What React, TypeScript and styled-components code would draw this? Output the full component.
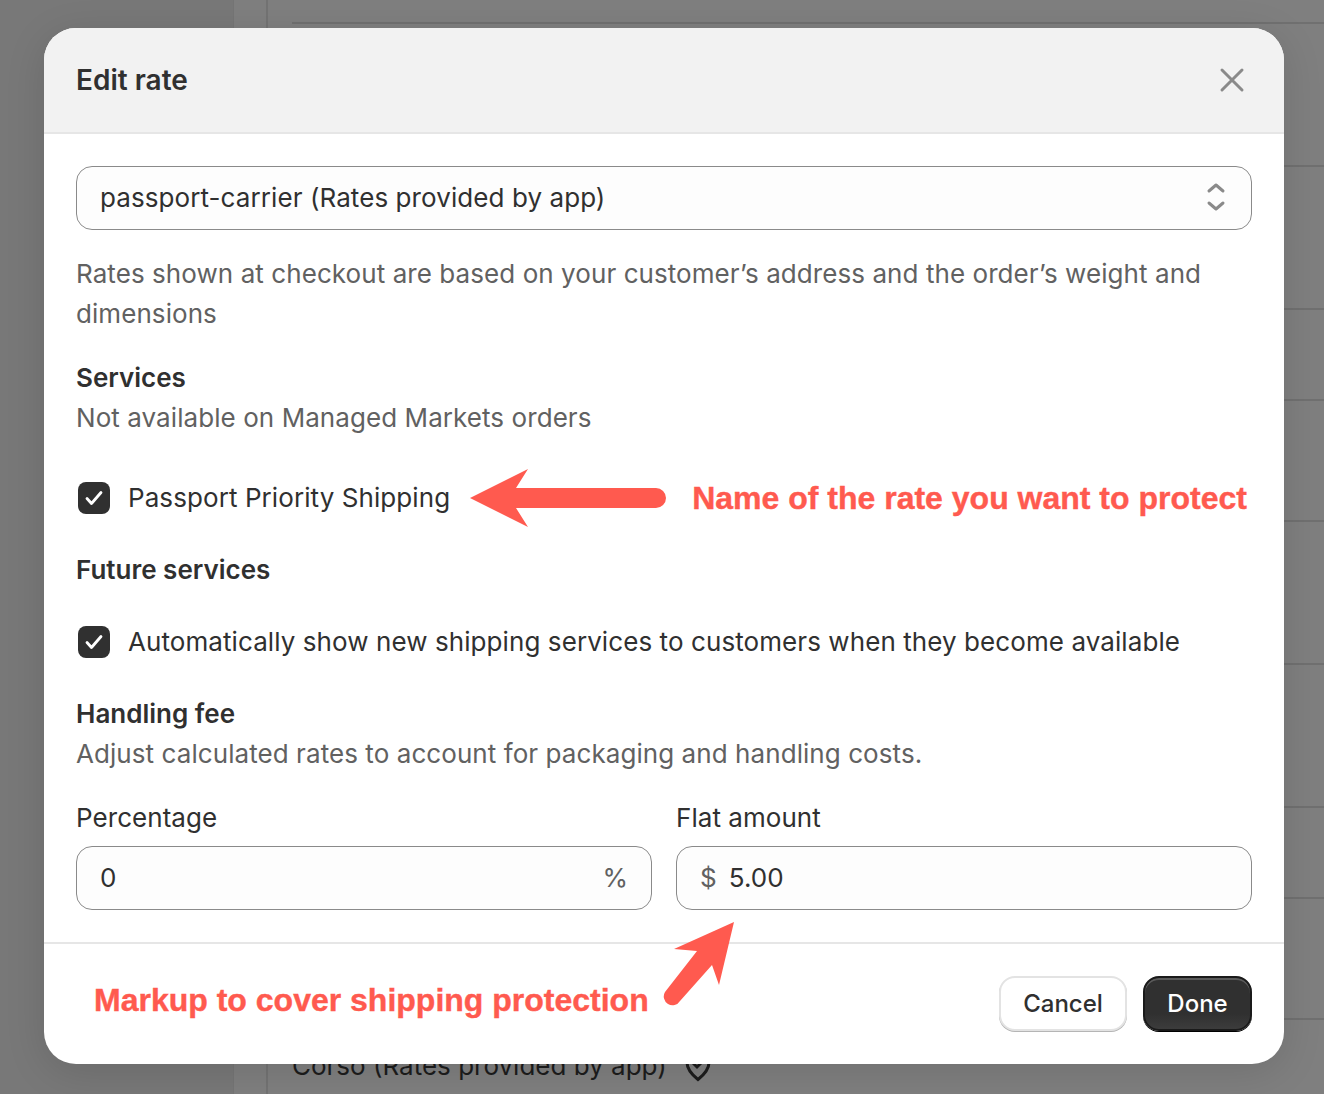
import React from "react";
import styled, { createGlobalStyle } from "styled-components";

const GlobalStyle = createGlobalStyle`
  html, body {
    margin: 0;
    padding: 0;
    height: 100%;
    overflow: hidden;
  }

  body {
    font-family: 'Inter', 'Liberation Sans', sans-serif;
    color: #303030;
  }
`;

const Page = styled.div`
  position: relative;
  width: 1324px;
  height: 1094px;
  overflow: hidden;
  display: flex;
  background: #7f7f7f;
`;

const SideNav = styled.div`
  width: 233px;
  flex-shrink: 0;
  background: #787878;
  border-right: 1px solid #757575;
`;

const Gutter = styled.div`
  width: 32px;
  flex-shrink: 0;
  border-right: 2px solid #737373;
`;

const RateList = styled.div`
  flex: 1;
  padding-left: 24px;
  display: flex;
  flex-direction: column;
`;

const RateRow = styled.div<{ $height: number }>`
  height: ${(p) => p.$height}px;
  flex-shrink: 0;
  box-sizing: border-box;
  border-bottom: 2px solid #707070;
`;

const CarrierRow = styled.div`
  display: flex;
  align-items: center;
  gap: 18px;
  padding-top: 26px;
  font-size: 26px;
  line-height: 40px;
  color: #1c1c1c;
`;

const Modal = styled.div`
  position: absolute;
  top: 28px;
  left: 44px;
  width: 1240px;
  height: 1036px;
  display: flex;
  flex-direction: column;
  overflow: hidden;
  border-radius: 32px;
  background: #ffffff;
  box-shadow: 0 8px 40px rgba(0, 0, 0, 0.12);
`;

const Header = styled.div`
  height: 106px;
  box-sizing: border-box;
  flex-shrink: 0;
  display: flex;
  align-items: center;
  justify-content: space-between;
  padding: 0 32px;
  background: #f2f2f2;
  border-bottom: 2px solid #e6e6e6;
`;

const Title = styled.div`
  font-size: 28px;
  font-weight: 600;
  letter-spacing: 0;
`;

const CloseIcon = styled.svg`
  width: 40px;
  height: 40px;
  display: block;
`;

const Body = styled.div`
  flex: 1;
  display: flex;
  flex-direction: column;
  padding: 32px 32px 0;
`;

const Field = styled.div`
  box-sizing: border-box;
  height: 64px;
  display: flex;
  align-items: center;
  justify-content: space-between;
  padding: 0 25px 2px 23px;
  background: #fdfdfd;
  border: 1px solid #8a8a8a;
  border-radius: 16px;
  font-size: 26px;
  letter-spacing: 0.08px;
`;

const Help = styled.div<{ $top?: number }>`
  margin-top: ${(p) => p.$top ?? 0}px;
  font-size: 26px;
  line-height: 40px;
  letter-spacing: 0.07px;
  color: #616161;
`;

const SectionTitle = styled.div<{ $top: number }>`
  margin-top: ${(p) => p.$top}px;
  font-size: 26px;
  line-height: 40px;
  font-weight: 600;
`;

const CheckRow = styled.div<{ $top: number }>`
  margin-top: ${(p) => p.$top}px;
  height: 40px;
  display: flex;
  align-items: center;
  font-size: 26px;
  letter-spacing: 0.08px;
  white-space: nowrap;
`;

const CheckLabel = styled.span`
  margin-top: -2px;
`;

const CheckBox = styled.div`
  width: 32px;
  height: 32px;
  margin: 0 18px 0 2px;
  flex-shrink: 0;
  display: flex;
  align-items: center;
  justify-content: center;
  border-radius: 8px;
  background: #303030;
`;

const LeftArrow = styled.svg`
  width: 196px;
  height: 60px;
  margin-left: 20px;
  flex-shrink: 0;
  display: block;
`;

const Callout = styled.div`
  font-family: 'Liberation Sans', Arial, sans-serif;
  font-size: 32px;
  font-weight: 700;
  letter-spacing: 0;
  color: #ff5a4f;
  white-space: nowrap;
  -webkit-text-stroke: 0.4px #ff5a4f;
`;

const RowCallout = styled(Callout)`
  margin-left: 26px;
`;

const AmountGrid = styled.div`
  margin-top: 24px;
  display: grid;
  grid-template-columns: 1fr 1fr;
  gap: 24px;
`;

const FieldLabel = styled.div`
  margin-bottom: 8px;
  font-size: 26px;
  line-height: 40px;
  letter-spacing: 0.05px;
`;

const Affix = styled.span`
  color: #616161;
`;

const PercentSign = styled(Affix)`
  margin-right: -2px;
`;

const AmountValue = styled.span`
  flex: 1;
`;

const DollarSign = styled(Affix)`
  margin-right: 12px;
`;

const Footer = styled.div`
  height: 122px;
  box-sizing: border-box;
  flex-shrink: 0;
  display: flex;
  align-items: center;
  justify-content: space-between;
  padding: 0 32px 0 50px;
  border-top: 2px solid #e6e6e6;
`;

const FooterCallout = styled(Callout)`
  margin-bottom: 8px;
`;

const Buttons = styled.div`
  display: flex;
  gap: 16px;
  margin-top: -2px;
`;

const Button = styled.div<{ $primary?: boolean }>`
  box-sizing: border-box;
  height: 55px;
  display: flex;
  align-items: center;
  justify-content: center;
  border-radius: 16px;
  font-size: 24px;
  font-weight: 500;
  width: ${(p) => (p.$primary ? 109 : 128)}px;
  color: ${(p) => (p.$primary ? "#ffffff" : "#303030")};
  background: ${(p) => (p.$primary ? "linear-gradient(#303030 70%, #3c3c3c)" : "#ffffff")};
  border: ${(p) => (p.$primary ? "2px solid #1a1a1a" : "2px solid #e3e3e3")};
  box-shadow: ${(p) =>
    p.$primary
      ? "inset 0 2px 0 #5a5a5a, 0 1px 0 #000000"
      : "0 1px 0 #b5b5b5"};
`;

const UpArrow = styled.svg`
  position: absolute;
  left: 660px;
  top: 920px;
  width: 78px;
  height: 88px;
`;

function Check() {
  return (
    <svg width="20" height="20" viewBox="0 0 20 20" fill="none" stroke="#fff" strokeWidth="2.8" strokeLinecap="round" strokeLinejoin="round">
      <path d="M3 10.500l4.500 5L17 4.500" />
    </svg>
  );
}

function App() {
  return (
    <Page>
      <GlobalStyle />

      <SideNav />
      <Gutter />
      <RateList>
        <RateRow $height={24} />
        <RateRow $height={143} />
        <RateRow $height={143} />
        <RateRow $height={91} />
        <RateRow $height={121} />
        <RateRow $height={143} />
        <RateRow $height={143} />
        <RateRow $height={91} />
        <RateRow $height={121} />
        <CarrierRow>
          Corso (Rates provided by app)
          <svg width="26" height="32" viewBox="0 0 26 32" fill="none" stroke="#1c1c1c" strokeWidth="3">
            <path d="M13 2.500c6 0 11 4 11 10 0 7-6 13-11 17C8 25.500 2 19.500 2 12.500c0-6 5-10 11-10Z" />
            <path d="M8 13l4 4 6-6" />
          </svg>
        </CarrierRow>
      </RateList>

      <Modal>
        <Header>
          <Title>Edit rate</Title>
          <CloseIcon viewBox="0 0 40 40" fill="none" stroke="#8a8a8a" strokeWidth="3" strokeLinecap="round">
            <path d="M10 10l20 20M30 10L10 30" />
          </CloseIcon>
        </Header>

        <Body>
          <Field>
            passport-carrier (Rates provided by app)
            <svg width="20" height="30" viewBox="0 0 20 30" fill="none" stroke="#8a8a8a" strokeWidth="3" strokeLinecap="round" strokeLinejoin="round">
              <path d="M3 9l7-6 7 6M3 21l7 6 7-6" />
            </svg>
          </Field>
          <Help $top={24}>
            Rates shown at checkout are based on your customer’s address and the order’s weight and dimensions
          </Help>

          <SectionTitle $top={24}>Services</SectionTitle>
          <Help>Not available on Managed Markets orders</Help>

          <CheckRow $top={40}>
            <CheckBox>
              <Check />
            </CheckBox>
            <CheckLabel>Passport Priority Shipping</CheckLabel>
            <LeftArrow viewBox="0 0 196 60">
              <path d="M0 30 58 1 46 20H186a10 10 0 0 1 0 20H46L58 59Z" fill="#ff5a4f" />
            </LeftArrow>
            <RowCallout>Name of the rate you want to protect</RowCallout>
          </CheckRow>

          <SectionTitle $top={32}>Future services</SectionTitle>

          <CheckRow $top={32}>
            <CheckBox>
              <Check />
            </CheckBox>
            <CheckLabel>Automatically show new shipping services to customers when they become available</CheckLabel>
          </CheckRow>

          <SectionTitle $top={32}>Handling fee</SectionTitle>
          <Help>Adjust calculated rates to account for packaging and handling costs.</Help>

          <AmountGrid>
            <div>
              <FieldLabel>Percentage</FieldLabel>
              <Field>
                <AmountValue>0</AmountValue>
                <PercentSign>%</PercentSign>
              </Field>
            </div>
            <div>
              <FieldLabel>Flat amount</FieldLabel>
              <Field>
                <DollarSign>$</DollarSign>
                <AmountValue>5.00</AmountValue>
              </Field>
            </div>
          </AmountGrid>
        </Body>

        <Footer>
          <FooterCallout>Markup to cover shipping protection</FooterCallout>
          <Buttons>
            <Button>Cancel</Button>
            <Button $primary>Done</Button>
          </Buttons>
        </Footer>
      </Modal>

      <UpArrow viewBox="0 0 78 88">
        <path d="M74 2 59 65 52 45 20 81a8 8 0 0 1-15-9L37 31 14 29Z" fill="#ff5a4f" />
      </UpArrow>
    </Page>
  );
}

export default App;
